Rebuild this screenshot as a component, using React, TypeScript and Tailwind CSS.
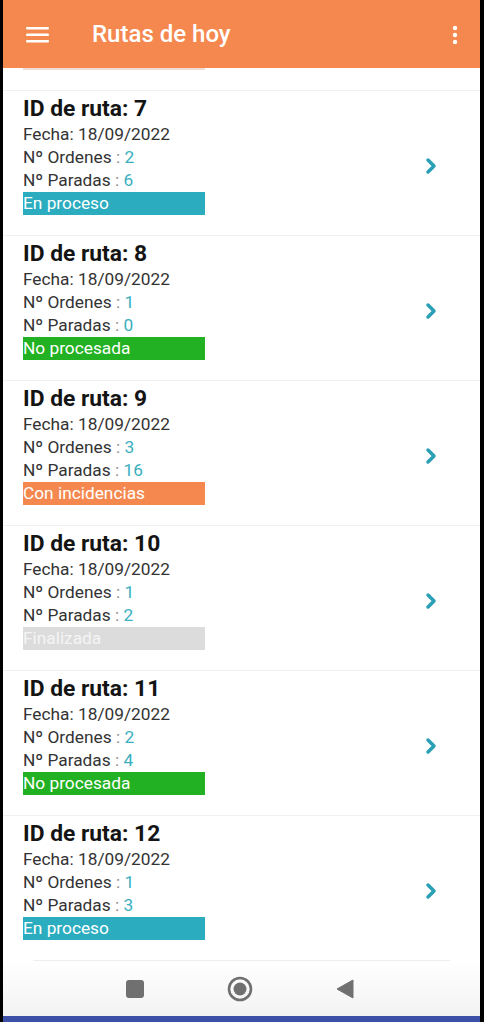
import { ChevronRight } from 'lucide-react';

type Ruta = {
  id: number;
  ordenes: number;
  paradas: number;
  estado: 'proceso' | 'noprocesada' | 'incidencias' | 'finalizada';
};

const rutas: Ruta[] = [
  { id: 7, ordenes: 2, paradas: 6, estado: 'proceso' },
  { id: 8, ordenes: 1, paradas: 0, estado: 'noprocesada' },
  { id: 9, ordenes: 3, paradas: 16, estado: 'incidencias' },
  { id: 10, ordenes: 1, paradas: 2, estado: 'finalizada' },
  { id: 11, ordenes: 2, paradas: 4, estado: 'noprocesada' },
  { id: 12, ordenes: 1, paradas: 3, estado: 'proceso' },
];

const estados = {
  proceso: { label: 'En proceso', cls: 'bg-[#2badbf] text-white' },
  noprocesada: { label: 'No procesada', cls: 'bg-[#22b122] text-white' },
  incidencias: { label: 'Con incidencias', cls: 'bg-[#f5884e] text-white' },
  finalizada: { label: 'Finalizada', cls: 'bg-[#dcdcdc] text-[#f4f4f4]' },
};

function Dato({ label, value }: { label: string; value: number }) {
  return (
    <div className="h-[23px] leading-[23px] text-[17.3px] text-[#333]">
      {label}
      <span className="text-[#8a8a8a]"> : </span>
      <span className="text-[#3aafc0]">{value}</span>
    </div>
  );
}

function RutaCard({ ruta }: { ruta: Ruta }) {
  const estado = estados[ruta.estado];
  return (
    <div className="flex h-[145px] items-center border-t border-[#f0f0f0] pl-5 pr-[37px]">
      <div className="flex h-full flex-1 flex-col pt-[5px]">
        <div className="mb-px h-[26px] text-[22.8px] font-bold leading-[26px] text-[#141414]">
          ID de ruta: {ruta.id}
        </div>
        <div className="h-[23px] leading-[23px] text-[17.3px] text-[#333]">Fecha: 18/09/2022</div>
        <Dato label="Nº Ordenes" value={ruta.ordenes} />
        <Dato label="Nº Paradas" value={ruta.paradas} />
        <div className={`h-[23px] w-[182px] leading-[23px] text-[17.3px] ${estado.cls}`}>{estado.label}</div>
      </div>
      <ChevronRight className="mt-[6px] h-[24px] w-[24px] text-[#2a9fb5]" strokeWidth={3.5} />
    </div>
  );
}

export default function App() {
  return (
    <div className="flex h-[1022px] w-[484px] bg-black font-['Roboto',sans-serif]">
      <div className="ml-[3px] flex w-[477px] flex-col bg-white">
        {/* toolbar */}
        <div className="flex h-[68px] shrink-0 items-center bg-[#f5884f] pl-[23px] pr-[22px]">
          <svg width="24" height="18" viewBox="0 0 24 18" className="mt-[2px]">
            <rect x="0" y="1" width="23" height="2.5" rx="1" fill="#fff" />
            <rect x="0" y="7.5" width="23" height="2.5" rx="1" fill="#fff" />
            <rect x="0" y="14" width="23" height="2.5" rx="1" fill="#fff" />
          </svg>
          <div className="ml-[42px] flex-1 text-[24px] font-medium text-white">Rutas de hoy</div>
          <svg width="6" height="20" viewBox="0 0 6 20" className="mt-[1px]">
            <circle cx="3" cy="3" r="2.2" fill="#fff" />
            <circle cx="3" cy="10" r="2.2" fill="#fff" />
            <circle cx="3" cy="17" r="2.2" fill="#fff" />
          </svg>
        </div>

        {/* tail of the previous card */}
        <div className="h-[22px] shrink-0 pl-5">
          <div className="h-[2px] w-[182px] bg-[#f0ded4]" />
        </div>

        {rutas.map((r) => (
          <RutaCard key={r.id} ruta={r} />
        ))}

        {/* navigation bar */}
        <div className="flex h-[56px] shrink-0 flex-col bg-gradient-to-b from-white to-[#f3f3f3]">
          <div className="mx-[30px] h-px bg-[#eeeeee]" />
          <div className="flex flex-1 items-center justify-center gap-[83px] pr-[3px]">
            <div className="h-[18px] w-[18px] rounded-[3px] bg-[#707070]" />
            <svg width="26" height="26" viewBox="0 0 26 26">
              <circle cx="13" cy="13" r="11" fill="none" stroke="#707070" strokeWidth="2.6" />
              <circle cx="13" cy="13" r="6.5" fill="#707070" />
            </svg>
            <svg width="18" height="20" viewBox="0 0 18 20">
              <path d="M17 1 L17 19 L1 10 Z" fill="#707070" strokeLinejoin="round" stroke="#707070" strokeWidth="1" />
            </svg>
          </div>
        </div>
        <div className="h-[6px] shrink-0 bg-[#3d50a8]" />
      </div>
    </div>
  );
}
